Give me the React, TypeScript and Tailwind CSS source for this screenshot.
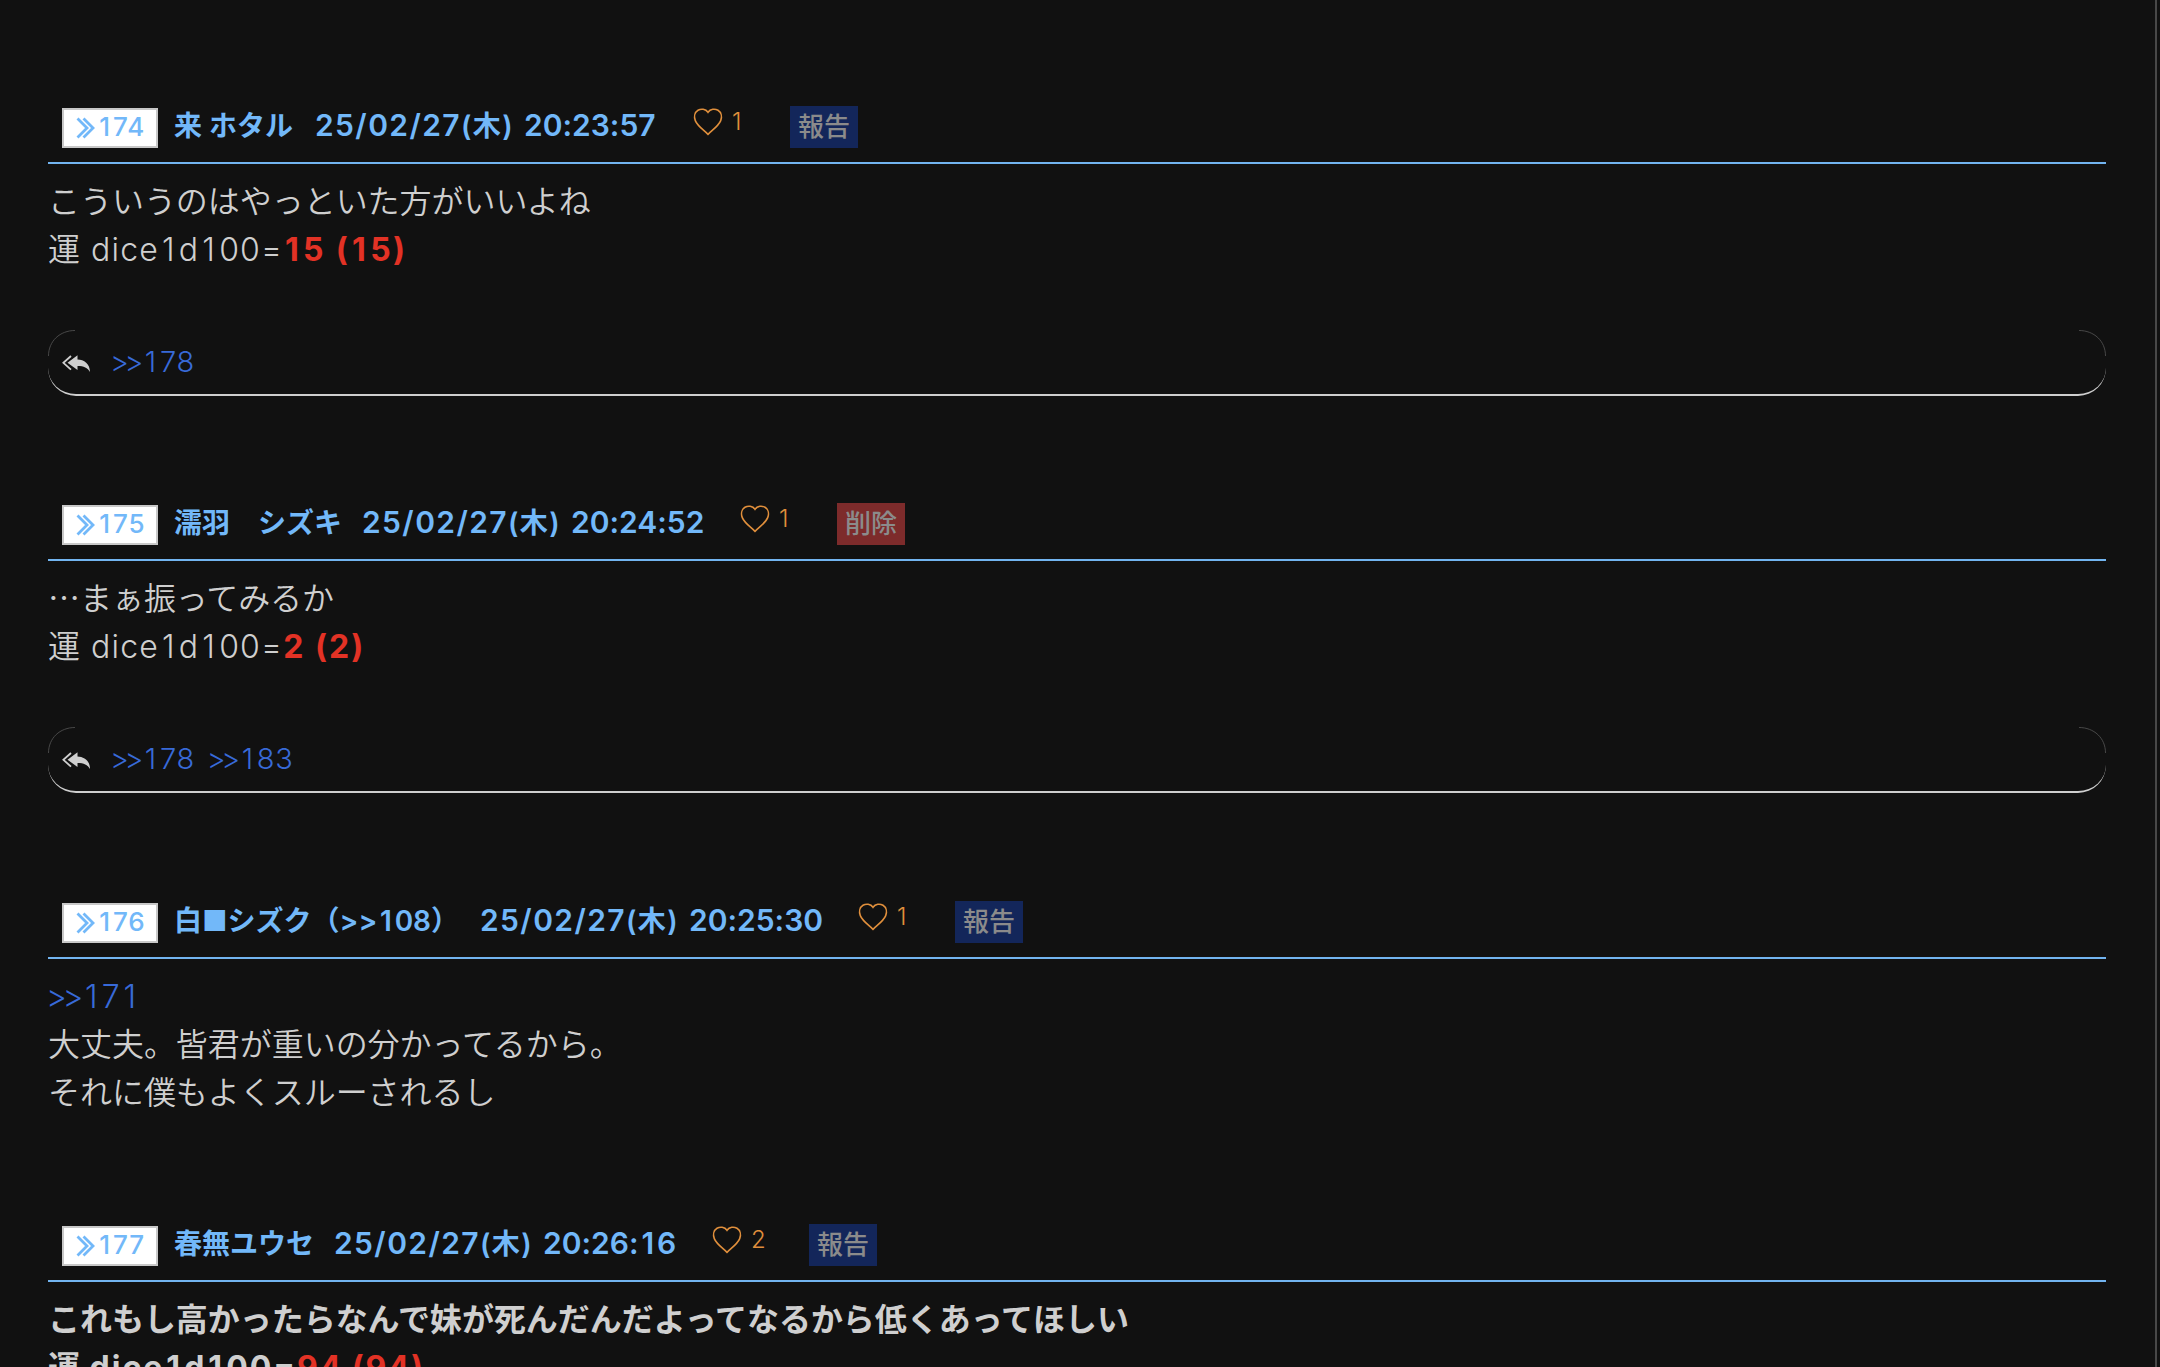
import clsx from 'clsx';

interface Post {
    id: number;
    name: string;
    nameClass: string;
    date: string;
    time: string;
    likes: number;
    own?: boolean;
    quote?: string;
    lines: string[];
    dice?: string;
    diceClass?: string;
    bold?: boolean;
    replies?: string[];
    spacing: string;
}

const posts: Post[] = [
    {
        id: 174,
        name: '来 ホタル',
        nameClass: 'w-[141px]',
        date: '25/02/27',
        time: '20:23:57',
        likes: 1,
        lines: ['こういうのはやっといた方がいいよね'],
        dice: '15 (15)',
        diceClass: 'tracking-[2.4px]',
        replies: ['178'],
        spacing: 'mb-[109px]',
    },
    {
        id: 175,
        name: '濡羽　シズキ',
        nameClass: 'w-[188px]',
        date: '25/02/27',
        time: '20:24:52',
        likes: 1,
        own: true,
        lines: ['…まぁ振ってみるか'],
        dice: '2 (2)',
        diceClass: 'tracking-[2px]',
        replies: ['178', '183'],
        spacing: 'mb-[110px]',
    },
    {
        id: 176,
        name: '白■シズク（>>108）',
        nameClass: 'w-[306px]',
        date: '25/02/27',
        time: '20:25:30',
        likes: 1,
        quote: '171',
        lines: ['大丈夫。皆君が重いの分かってるから。', 'それに僕もよくスルーされるし'],
        spacing: 'mb-[110px]',
    },
    {
        id: 177,
        name: '春無ユウセ',
        nameClass: 'w-[160px]',
        date: '25/02/27',
        time: '20:26:16',
        likes: 2,
        lines: ['これもし高かったらなんで妹が死んだんだよってなるから低くあってほしい'],
        dice: '94 (94)',
        diceClass: 'tracking-[1.6px]',
        bold: true,
        spacing: '',
    },
];

// Inter's plain "1" is narrow, so give it the width of the other digits
function Digits({ text }: { text: string }) {
    return (
        <>
            {text.split(/(1)/).map((part, idx) =>
                part === '1' ? (
                    <span key={idx} className="inline-block w-[0.62em] text-center">
                        1
                    </span>
                ) : (
                    part
                )
            )}
        </>
    );
}

function QuoteIcon() {
    return (
        <svg className="mt-[7px] h-[22px] w-5 shrink-0" viewBox="0 0 20 22" fill="none" stroke="currentColor" strokeWidth="2.8">
            <path d="M1.5 1.5 11 11 1.5 20.5M7.5 1.5 17 11 7.5 20.5" />
        </svg>
    );
}

function HeartIcon() {
    return (
        <svg className="h-[28px] w-[30px] shrink-0" viewBox="0 0 30 28" fill="none" stroke="currentColor" strokeWidth="1.6">
            <path d="M15 4.3C12.6.7 8 .5 5 2.3 1.6 4.4.8 8.8 2.3 12.6 4.4 17.8 10 21.5 15 26.3 20 21.5 25.6 17.8 27.7 12.6 29.2 8.8 28.4 4.4 25 2.3 22 .5 17.4.7 15 4.3Z" />
        </svg>
    );
}

function ReplyIcon() {
    return (
        <svg className="mt-1 h-[18px] w-7 shrink-0" viewBox="0 0 28 18">
            <path d="M9 1 1.4 7.8 9 14.6" fill="none" stroke="currentColor" strokeWidth="1.8" />
            <path d="M5.5 7.7 15.5.2V4.4C22 4.6 28 8.5 28 17 25.5 12.7 22 11 15.5 11V15Z" fill="currentColor" />
        </svg>
    );
}

function RefLink({ id }: { id: string }) {
    return (
        <span className="text-[#386ad8]">
            <span className="-ml-0.5 tracking-[-4.5px]">&gt;&gt;</span>
            <span className="ml-[3px] tracking-[0.7px]">
                <Digits text={id} />
            </span>
        </span>
    );
}

function PostHeader({ post }: { post: Post }) {
    return (
        <div className="flex h-14 items-start border-b-2 border-[#72b4f0] pl-[14px] text-[#72b8f9]">
            <div className="flex h-10 w-24 shrink-0 border-2 border-[#c8c8c8] bg-white pl-3">
                <QuoteIcon />
                <span className="ml-px text-[26px] leading-[33px] font-medium tracking-[0.8px] whitespace-nowrap">
                    <Digits text={String(post.id)} />
                </span>
            </div>
            <div className="ml-4 flex items-baseline text-[28px] leading-[34px] font-semibold whitespace-pre">
                <span className={clsx('shrink-0', post.nameClass)}>
                    <Digits text={post.name} />
                </span>
                <span className="w-[209px] shrink-0 text-[30px] tracking-[1.4px]">
                    {post.date}
                    <span className="text-[28px]">(木)</span>
                </span>
                <span className="w-[134px] shrink-0 text-[30px]">
                    <Digits text={post.time} />
                </span>
            </div>
            <div className="ml-[35px] flex shrink-0 text-[#e08f3c]">
                <HeartIcon />
                <span className="ml-[9px] w-[58px] text-2xl leading-[28px] font-light">{post.likes}</span>
            </div>
            <div
                className={clsx(
                    '-mt-0.5 h-[42px] w-[68px] shrink-0 text-center text-[26px] leading-[41px] font-medium text-[#8b8b8b]',
                    post.own ? 'bg-[#7d2b2b]' : 'bg-[#13265a]'
                )}
            >
                {post.own ? '削除' : '報告'}
            </div>
        </div>
    );
}

function ReplyBar({ replies }: { replies: string[] }) {
    return (
        <div className="relative mt-14 flex h-[66px] items-center rounded-[28px] border-b-2 border-[#cfcfcf] pl-[14px]">
            {/* faint upper corners */}
            <svg className="absolute top-0 left-0 h-7 w-7" viewBox="0 0 28 28" fill="none">
                <path d="M.5 26C.5 11 12 .5 27 .5" stroke="#555" strokeWidth="0.8" />
            </svg>
            <svg className="absolute top-0 right-0 h-7 w-7" viewBox="0 0 28 28" fill="none">
                <path d="M27.5 26C27.5 11 16 .5 1 .5" stroke="#555" strokeWidth="0.8" />
            </svg>
            <ReplyIcon />
            <div className="ml-[22px] flex gap-[14px] pb-0.5 text-[29px] leading-none font-light">
                {replies.map(reply => (
                    <RefLink key={reply} id={reply} />
                ))}
            </div>
        </div>
    );
}

export default function App() {
    return (
        <div className="flex h-[1367px] overflow-hidden bg-[#111] font-['Inter','Noto_Sans_CJK_JP',sans-serif] text-[#cfcfcf] [font-variant-ligatures:no-contextual]">
            <main lang="ja" className="ml-12 w-[2058px] shrink-0 pt-[108px]">
                {posts.map(post => (
                    <article key={post.id} className={post.spacing}>
                        <PostHeader post={post} />
                        <div className={clsx('pt-[14px] text-[32px] leading-[48px]', post.bold ? 'font-bold' : 'font-[350]')}>
                            {post.quote && (
                                <p className="font-light">
                                    <RefLink id={post.quote} />
                                </p>
                            )}
                            {post.lines.map(line => (
                                <p
                                    key={line}
                                    className="h-12 font-['Noto_Sans_CJK_JP',sans-serif] leading-[43px] tracking-[-0.04px]"
                                >
                                    {line}
                                </p>
                            ))}
                            {post.dice && (
                                <p className="h-12">
                                    運{' '}
                                    <span
                                        className={clsx(
                                            'ml-0.5',
                                            post.bold ? 'tracking-[2px]' : 'font-light tracking-[1.2px]'
                                        )}
                                    >
                                        <Digits text="dice1d100=" />
                                    </span>
                                    <span className={clsx('font-bold text-[#e33225]', post.diceClass)}>
                                        <Digits text={post.dice} />
                                    </span>
                                </p>
                            )}
                        </div>
                        {post.replies ? <ReplyBar replies={post.replies} /> : <div className="-mt-px" />}
                    </article>
                ))}
            </main>
            {/* scrollbar track edge */}
            <div className="ml-[49px] w-0.5 bg-[#484848]" />
        </div>
    );
}
